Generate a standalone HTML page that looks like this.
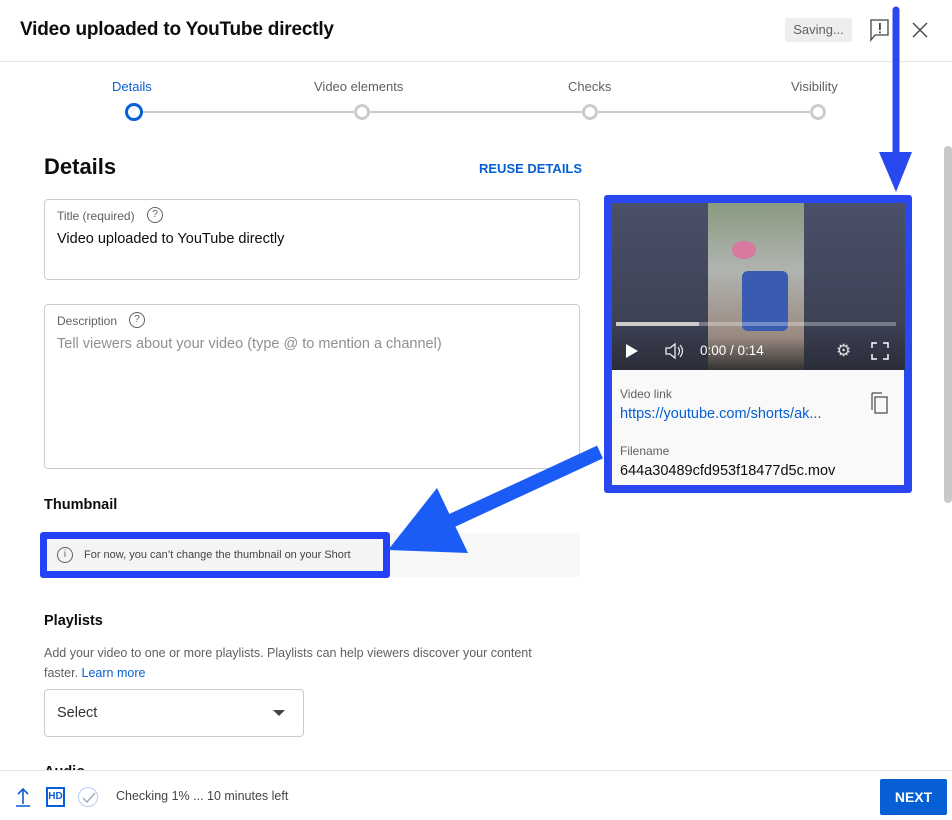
<!DOCTYPE html>
<html><head><meta charset="utf-8"><style>
*{box-sizing:border-box;margin:0;padding:0}
body{width:952px;height:820px;overflow:hidden;background:#fff;font-family:"Liberation Sans",sans-serif;position:relative;color:#0d0d0d}
.a{position:absolute}
.lbl{font-size:12px;color:#606060}
</style></head><body>
<div class="a" style="left:20px;top:19px;font-size:19px;font-weight:bold;color:#0d0d0d;letter-spacing:-0.2px">Video uploaded to YouTube directly</div>
<div class="a" style="left:785px;top:18px;width:67px;height:24px;background:#eee;border-radius:2px;font-size:13px;color:#606060;text-align:center;line-height:24px">Saving...</div>
<svg class="a" style="left:869px;top:18px" width="22" height="24" viewBox="0 0 22 24"><path d="M2 2H19V17H6L2 22Z" fill="none" stroke="#444" stroke-width="1.3"/><rect x="10" y="5" width="1.8" height="7" fill="#444"/><rect x="10" y="13.5" width="1.8" height="1.8" fill="#444"/></svg>
<svg class="a" style="left:911px;top:21px" width="18" height="18"><path d="M2 2L16 16M16 2L2 16" stroke="#444" stroke-width="1.4"/></svg>
<div class="a" style="left:0;top:61px;width:952px;height:1px;background:#e5e5e5"></div>
<div class="a" style="left:112px;top:79px;font-size:13px;color:#065fd4">Details</div>
<div class="a" style="left:314px;top:79px;font-size:13px;color:#606060">Video elements</div>
<div class="a" style="left:568px;top:79px;font-size:13px;color:#606060">Checks</div>
<div class="a" style="left:791px;top:79px;font-size:13px;color:#606060">Visibility</div>
<div class="a" style="left:134px;top:111px;width:684px;height:2px;background:#ccc"></div>
<div class="a" style="left:125px;top:103px;width:18px;height:18px;border:3.5px solid #065fd4;border-radius:50%;background:#fff"></div>
<div class="a" style="left:354px;top:104px;width:16px;height:16px;border:3px solid #ccc;border-radius:50%;background:#fff"></div>
<div class="a" style="left:582px;top:104px;width:16px;height:16px;border:3px solid #ccc;border-radius:50%;background:#fff"></div>
<div class="a" style="left:810px;top:104px;width:16px;height:16px;border:3px solid #ccc;border-radius:50%;background:#fff"></div>
<div class="a" style="left:44px;top:154px;font-size:22px;font-weight:bold">Details</div>
<div class="a" style="left:479px;top:161px;font-size:13px;font-weight:bold;color:#065fd4">REUSE DETAILS</div>
<div class="a" style="left:44px;top:199px;width:536px;height:81px;border:1px solid #ccc;border-radius:4px"></div>
<div class="a lbl" style="left:57px;top:209px">Title (required)</div>
<div class="a" style="left:147px;top:207px;width:16px;height:16px;border:1.3px solid #606060;border-radius:50%;font-size:10px;text-align:center;line-height:14px;color:#606060">?</div>
<div class="a" style="left:57px;top:231px;font-size:14.5px">Video uploaded to YouTube directly</div>
<div class="a" style="left:44px;top:304px;width:536px;height:165px;border:1px solid #ccc;border-radius:4px"></div>
<div class="a lbl" style="left:57px;top:314px">Description</div>
<div class="a" style="left:129px;top:312px;width:16px;height:16px;border:1.3px solid #606060;border-radius:50%;font-size:10px;text-align:center;line-height:14px;color:#606060">?</div>
<div class="a" style="left:57px;top:336px;font-size:14.5px;color:#909090">Tell viewers about your video (type @ to mention a channel)</div>
<div class="a" style="left:44px;top:497px;font-size:14.5px;font-weight:bold">Thumbnail</div>
<div class="a" style="left:40px;top:533px;width:540px;height:44px;background:#f7f7f7;border-radius:3px"></div>
<div class="a" style="left:40px;top:532px;width:350px;height:46px;border:7px solid #2541f5;border-radius:3px;background:#f4f4f4"></div>
<div class="a" style="left:57px;top:547px;width:16px;height:16px;border:1.2px solid #606060;border-radius:50%;font-size:10px;text-align:center;line-height:14px;color:#606060">i</div>
<div class="a" style="left:84px;top:549px;font-size:11px;color:#444">For now, you can’t change the thumbnail on your Short</div>
<div class="a" style="left:44px;top:613px;font-size:14.5px;font-weight:bold">Playlists</div>
<div class="a" style="left:44px;top:643px;font-size:12.5px;color:#606060;line-height:20px;width:515px">Add your video to one or more playlists. Playlists can help viewers discover your content faster. <span style="color:#065fd4">Learn more</span></div>
<div class="a" style="left:44px;top:689px;width:260px;height:48px;border:1px solid #ccc;border-radius:4px"></div>
<div class="a" style="left:57px;top:705px;font-size:14.5px;color:#333">Select</div>
<div class="a" style="left:273px;top:710px;width:0;height:0;border-left:6px solid transparent;border-right:6px solid transparent;border-top:6px solid #444"></div>
<div class="a" style="left:44px;top:764px;font-size:14.5px;font-weight:bold">Audio</div>
<div class="a" style="left:604px;top:195px;width:308px;height:298px;border:8px solid #2a48f0;border-radius:3px;background:#f9f9f9"></div>
<div class="a" style="left:612px;top:203px;width:293px;height:167px;background:linear-gradient(#4a5068,#3d4256 70%,#2a2d38);overflow:hidden">
 <div class="a" style="left:96px;top:0;width:96px;height:167px;background:linear-gradient(#8a9a80,#b0b4b0 40%,#9a8a80 80%,#333)"></div>
 <div class="a" style="left:120px;top:38px;width:24px;height:18px;background:#d87aa0;border-radius:50%"></div>
 <div class="a" style="left:130px;top:68px;width:46px;height:60px;background:#3a5cb0;border-radius:6px"></div>
 <div class="a" style="left:4px;top:119px;width:280px;height:4px;background:rgba(255,255,255,.3)"></div>
 <div class="a" style="left:4px;top:119px;width:83px;height:4px;background:#ccc"></div>
 <div class="a" style="left:14px;top:141px;width:0;height:0;border-top:7px solid transparent;border-bottom:7px solid transparent;border-left:12px solid #fff"></div>
 <svg class="a" style="left:52px;top:139px" width="20" height="18"><path d="M2 6H6L11 2V16L6 12H2Z" fill="none" stroke="#eee" stroke-width="1.3"/><path d="M14 5Q17 9 14 13M16 3Q21 9 16 15" fill="none" stroke="#eee" stroke-width="1.2"/></svg>
 <div class="a" style="left:88px;top:140px;font-size:13.5px;color:#fff">0:00 / 0:14</div>
 <div class="a" style="left:224px;top:139px;font-size:17px;color:#ddd;line-height:17px">⚙</div>
 <svg class="a" style="left:259px;top:139px" width="18" height="18"><path d="M1 6V1H6M12 1H17V6M17 12V17H12M6 17H1V12" fill="none" stroke="#fff" stroke-width="1.5"/></svg>
</div>
<div class="a lbl" style="left:620px;top:387px">Video link</div>
<div class="a" style="left:620px;top:406px;font-size:14.5px;color:#065fd4">https://youtube.com/shorts/ak...</div>
<svg class="a" style="left:869px;top:391px" width="22" height="24"><path d="M3 2H13" stroke="#555" stroke-width="1.3" fill="none"/><path d="M3 2V19" stroke="#555" stroke-width="1.3"/><rect x="6" y="6" width="12" height="16" fill="none" stroke="#555" stroke-width="1.3"/></svg>
<div class="a lbl" style="left:620px;top:444px">Filename</div>
<div class="a" style="left:620px;top:463px;font-size:14.5px;color:#0d0d0d">644a30489cfd953f18477d5c.mov</div>
<div class="a" style="left:944px;top:146px;width:8px;height:357px;background:#c8c8c8;border-radius:4px"></div>
<svg class="a" style="left:0;top:0" width="952" height="820"><line x1="896" y1="10" x2="896" y2="155" stroke="#2a48f0" stroke-width="7" stroke-linecap="round"/><polygon points="879,152 912,152 896,192" fill="#2a48f0"/>
<line x1="600" y1="452" x2="440" y2="526" stroke="#1a5cf5" stroke-width="14"/><polygon points="388,550 437,488 468,553" fill="#1a5cf5"/></svg>
<div class="a" style="left:0;top:770px;width:952px;height:50px;background:#fff;border-top:1px solid #e5e5e5"></div>
<svg class="a" style="left:14px;top:786px" width="18" height="22"><path d="M9 3V18M4 8L9 3L14 8M2 20H16" fill="none" stroke="#065fd4" stroke-width="1.6"/></svg>
<div class="a" style="left:46px;top:787px;width:19px;height:20px;border:2px solid #065fd4;font-size:10px;font-weight:bold;color:#065fd4;text-align:center;line-height:16px">HD</div>
<div class="a" style="left:78px;top:787px;width:20px;height:20px;border:1.5px solid #b8cbf0;border-radius:50%"></div>
<svg class="a" style="left:82px;top:792px" width="14" height="12"><path d="M1 6L5 10L13 1" fill="none" stroke="#9ab" stroke-width="1.4"/></svg>
<div class="a" style="left:116px;top:789px;font-size:12.5px;color:#444">Checking 1% ... 10 minutes left</div>
<div class="a" style="left:880px;top:779px;width:67px;height:36px;background:#065fd4;border-radius:2px;color:#fff;font-size:14px;font-weight:bold;text-align:center;line-height:36px">NEXT</div>
</body></html>
